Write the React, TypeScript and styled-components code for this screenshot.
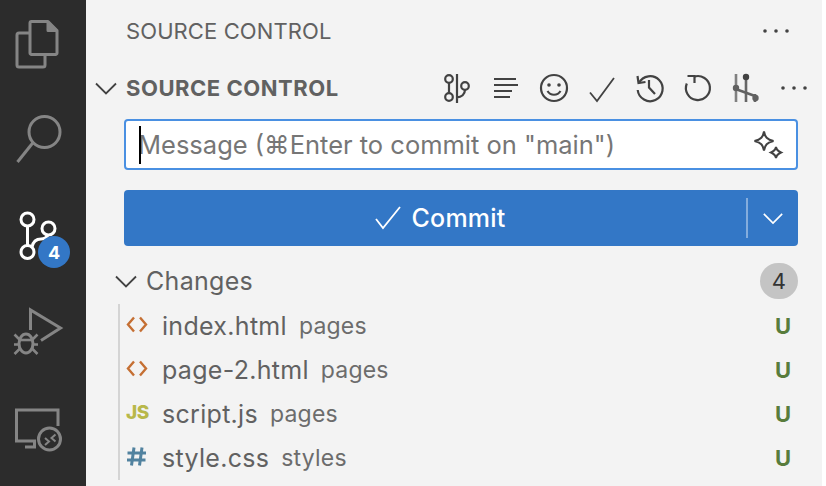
import React from "react";
import styled, { createGlobalStyle } from "styled-components";

const Global = createGlobalStyle`
  html, body { margin: 0; padding: 0; background: #ffffff; }
  body { font-family: Inter, "Liberation Sans", sans-serif; overflow: hidden; }
`;

const Window = styled.div`
  width: 822px;
  height: 486px;
  display: flex;
  background: #f3f3f3;
  overflow: hidden;
`;

const ActivityBar = styled.nav`
  width: 86px;
  flex: none;
  background: #2c2c2c;
  display: flex;
  flex-direction: column;
`;

const ActivityItem = styled.div`
  position: relative;
  height: 96px;
  width: 86px;
  svg { display: block; }
`;

const Badge = styled.span`
  position: absolute;
  left: 38px;
  top: 44px;
  width: 32px;
  height: 32px;
  border-radius: 50%;
  background: #3377c6;
  color: #fff;
  font-size: 18px;
  font-weight: 700;
  display: flex;
  align-items: center;
  justify-content: center;
`;

const SideBar = styled.main`
  flex: 1;
  min-width: 0;
  display: flex;
  flex-direction: column;
`;

const PanelTitleBar = styled.header`
  height: 62px;
  display: flex;
  align-items: center;
  justify-content: space-between;
  padding: 0 32px 0 40px;
  color: #616161;
  font-size: 22px;
  letter-spacing: 0.1px;
  flex: none;
`;

const SectionHeader = styled.div`
  height: 52px;
  display: flex;
  align-items: center;
  padding-left: 8px;
  flex: none;
`;

const SectionTitle = styled.h2`
  margin: 0 0 0 8px;
  flex: 1;
  font-size: 22px;
  font-weight: 700;
  color: #616161;
  letter-spacing: 0.53px;
`;

const Toolbar = styled.div`
  display: flex;
  margin-right: 4px;
`;

const ToolIcon = styled.span`
  width: 48px;
  height: 48px;
  display: flex;
  svg { display: block; }
`;

const Composer = styled.section`
  padding: 5px 24px 0 38px;
  display: flex;
  flex-direction: column;
  gap: 20px;
  flex: none;
`;

const InputBox = styled.div`
  height: 51px;
  box-sizing: border-box;
  border: 2px solid #4a90e2;
  border-radius: 4px;
  background: #fff;
  display: flex;
  align-items: center;
  padding: 0 12px 0 13px;
  color: #767676;
  font-size: 25.5px;
`;

const Caret = styled.span`
  width: 2px;
  height: 38px;
  background: #000;
  flex: none;
  position: relative;
  z-index: 1;
`;

const Placeholder = styled.span`
  flex: 1;
  margin-left: -3px;
  white-space: nowrap;
`;

const CommitButton = styled.button`
  height: 56px;
  border: none;
  padding: 0;
  border-radius: 4px;
  background: #3377c6;
  color: #fff;
  font: inherit;
  font-size: 25px;
  font-weight: 500;
  letter-spacing: 0.2px;
  display: flex;
  align-items: center;
`;

const CommitLabel = styled.span`
  flex: 1;
  display: flex;
  align-items: center;
  justify-content: center;
  gap: 10px;
  padding-left: 9px;
`;

const SplitDivider = styled.span`
  width: 2px;
  height: 40px;
  background: rgba(255, 255, 255, 0.4);
  flex: none;
`;

const SplitChevron = styled.span`
  width: 50px;
  display: flex;
  justify-content: center;
`;

const GroupHeader = styled.div`
  margin-top: 14px;
  height: 42px;
  display: flex;
  align-items: center;
  padding: 0 24px 0 28px;
  color: #616161;
  font-size: 25px;
  letter-spacing: 0.3px;
  flex: none;
`;

const GroupName = styled.span`
  flex: 1;
  margin-left: 8px;
`;

const CountBadge = styled.span`
  width: 38px;
  height: 36px;
  border-radius: 18px;
  background: #c4c4c4;
  color: #333;
  font-size: 22px;
  display: flex;
  align-items: center;
  justify-content: center;
`;

const FileList = styled.ul`
  list-style: none;
  margin: 2px 0 0 32px;
  padding: 0 24px 0 0;
  border-left: 2px solid #d4d4d4;
  height: 176px;
`;

const FileRow = styled.li`
  height: 44px;
  display: flex;
  align-items: center;
  color: #616161;
`;

const FileIcon = styled.span`
  width: 42px;
  flex: none;
  display: flex;
  padding-left: 6px;
  box-sizing: border-box;
  svg { display: block; }
`;

const JsIcon = styled.span`
  color: #b8b84a;
  font-size: 19px;
  font-weight: 800;
  letter-spacing: -0.5px;
  line-height: 20px;
  margin-top: -3px;
`;

const FileName = styled.span`
  font-size: 25px;
  letter-spacing: 0.3px;
`;

const FilePath = styled.span`
  margin-left: 12px;
  font-size: 23px;
  letter-spacing: 0.2px;
  flex: 1;
  color: #6c6c6c;
`;

const Status = styled.span`
  width: 23px;
  font-size: 22px;
  font-weight: 700;
  color: #587c3c;
`;

const Stroke = {
  fill: "none",
  stroke: "currentColor",
  strokeWidth: 2.2,
} as const;

const BAR = "#858585";

const FilesGlyph = () => (
  <svg width="86" height="96" viewBox="0 0 86 96" fill="none" stroke={BAR} strokeWidth="3" strokeLinejoin="round">
    <path d="M29.5 33H19a2 2 0 0 0-2 2v30a2 2 0 0 0 2 2h24a2 2 0 0 0 2-2V54.5" />
    <path d="M31.5 21.5H48l9 9V53a1.5 1.5 0 0 1-1.5 1.5h-24A1.5 1.5 0 0 1 30 53V23a1.5 1.5 0 0 1 1.5-1.5Z" />
    <path d="M48 21.5V30.5H57" fill={BAR} />
  </svg>
);

const SearchGlyph = () => (
  <svg width="86" height="96" viewBox="0 0 86 96" fill="none" stroke={BAR} strokeWidth="3">
    <circle cx="44.5" cy="36" r="15.5" />
    <path d="M33.5 46 17.5 66" />
  </svg>
);

const ScmGlyph = () => (
  <svg width="86" height="96" viewBox="0 0 86 96" fill="none" stroke="#fff" strokeWidth="3">
    <circle cx="27.5" cy="27.5" r="6.5" />
    <circle cx="48.5" cy="36.5" r="6.5" />
    <circle cx="27.5" cy="60" r="6.5" />
    <path d="M27.5 34v19.5" />
    <path d="M32 55c1-5 4-8 9-8 3 0 5.500-1.500 7-4" />
  </svg>
);

const DebugGlyph = () => (
  <svg width="86" height="96" viewBox="0 0 86 96" fill="none" stroke={BAR} strokeWidth="3">
    <path d="M30.5 42V22L60.5 40 41 52.5" />
    <ellipse cx="26" cy="55.500" rx="7" ry="9.500" />
    <path d="M19.500 52h13" strokeWidth="2.600" />
    <path d="M14.500 46.500l5 5M37.500 46.500l-5 5M14 56.500h5M38 56.500h-5M14.500 66l5-5M37.500 66l-5-5" strokeWidth="2.600" />
  </svg>
);

const RemoteGlyph = () => (
  <svg width="86" height="96" viewBox="0 0 86 96" fill="none" stroke={BAR} strokeWidth="3">
    <path d="M58 42V26H16.500V57H36" />
    <path d="M25 63h11" />
    <path d="M34.500 57v6" />
    <circle cx="49.500" cy="55" r="11" />
    <path d="M45 54l4 3.500-4 3.500M55.500 50.500l-4 3.500 4 3.500" strokeWidth="2" />
  </svg>
);

const Tool = ({ children }: { children: React.ReactNode }) => (
  <ToolIcon>
    <svg width="48" height="48" viewBox="0 0 48 48" {...Stroke} color="#424242">
      {children}
    </svg>
  </ToolIcon>
);

const Chevron = ({ color = "#424242", size = 24 }: { color?: string; size?: number }) => (
  <svg width={size} height={size} viewBox="0 0 24 24" fill="none" stroke={color} strokeWidth="1.800">
    <path d="M2 7.500 12 17.500 22 7.500" />
  </svg>
);

const Ellipsis = () => (
  <svg width="28" height="6" viewBox="0 0 28 6" fill="#424242">
    <circle cx="3" cy="3" r="1.800" />
    <circle cx="14" cy="3" r="1.800" />
    <circle cx="25" cy="3" r="1.800" />
  </svg>
);

const HtmlGlyph = () => (
  <svg width="22" height="24" viewBox="0 0 22 24" fill="none" stroke="#c56f33" strokeWidth="2.400">
    <path d="M8 3.500 2 10.500l6 7M14 3.500l6 7-6 7" />
  </svg>
);

const HashGlyph = () => (
  <svg width="22" height="24" viewBox="0 0 22 24" fill="none" stroke="#51829f" strokeWidth="3">
    <path d="M8 1.500 5.500 19.500M16 1.500l-2.500 18M1.500 7H20M1 14h18.500" />
  </svg>
);

const files = [
  { name: "index.html", dir: "pages", icon: <HtmlGlyph /> },
  { name: "page-2.html", dir: "pages", icon: <HtmlGlyph /> },
  { name: "script.js", dir: "pages", icon: <JsIcon>JS</JsIcon> },
  { name: "style.css", dir: "styles", icon: <HashGlyph /> },
];

export default function App() {
  return (
    <>
      <Global />
      <Window>
        <ActivityBar>
          <ActivityItem><FilesGlyph /></ActivityItem>
          <ActivityItem><SearchGlyph /></ActivityItem>
          <ActivityItem>
            <ScmGlyph />
            <Badge>4</Badge>
          </ActivityItem>
          <ActivityItem><DebugGlyph /></ActivityItem>
          <ActivityItem><RemoteGlyph /></ActivityItem>
        </ActivityBar>
        <SideBar>
          <PanelTitleBar>
            <span>SOURCE CONTROL</span>
            <Ellipsis />
          </PanelTitleBar>
          <SectionHeader>
            <Chevron />
            <SectionTitle>SOURCE CONTROL</SectionTitle>
            <Toolbar>
              <Tool>
                <circle cx="15" cy="15" r="3.800" />
                <circle cx="15" cy="33" r="3.800" />
                <circle cx="31" cy="22" r="3.800" />
                <path d="M15 18.800V29.200M23 10v29M31 25.800c0 4.500-3.500 7.500-8 7.500" />
              </Tool>
              <Tool>
                <path d="M12 15h22M12 21h24M12 27h18M12 33h16" />
              </Tool>
              <Tool>
                <circle cx="24" cy="24" r="13" />
                <circle cx="19" cy="21" r="1.800" fill="currentColor" stroke="none" />
                <circle cx="29" cy="21" r="1.800" fill="currentColor" stroke="none" />
                <path d="M17.500 27c3 5 10 5 13 0" />
              </Tool>
              <Tool>
                <path d="M12 28.500 19 37 36 14" strokeWidth="1.800" />
              </Tool>
              <Tool>
                <path d="M13 19a12.500 12.500 0 1 1-1.300 7" />
                <path d="M11.500 12l1 7 7-1M23 16v7.500l6 6.500" />
              </Tool>
              <Tool>
                <path d="M20 12.700a12 12 0 1 1-7.200 6.800" />
                <path d="M13.500 12h7v7" />
              </Tool>
              <Tool>
                <path d="M14 10v28" stroke="#808080" strokeWidth="2.600" />
                <path d="M24 14v24M33 30v8" stroke="#666" strokeWidth="2.600" />
                <circle cx="24" cy="13" r="3.200" fill="currentColor" stroke="none" />
                <circle cx="14" cy="24" r="3.200" fill="#606060" stroke="none" />
                <circle cx="33.500" cy="34" r="3.200" fill="#606060" stroke="none" />
                <path d="M15 25.500 33 32" stroke="#606060" strokeWidth="2.600" />
              </Tool>
              <ToolIcon>
                <svg width="48" height="48" viewBox="0 0 48 48" fill="#424242">
                  <circle cx="13" cy="24" r="1.800" />
                  <circle cx="24" cy="24" r="1.800" />
                  <circle cx="35" cy="24" r="1.800" />
                </svg>
              </ToolIcon>
            </Toolbar>
          </SectionHeader>
          <Composer>
            <InputBox>
              <Caret />
              <Placeholder>Message (⌘Enter to commit on "main")</Placeholder>
              <svg width="32" height="32" viewBox="0 0 32 32" fill="none" stroke="#424242" strokeWidth="2">
                <path d="M12 2.500c1 5.500 3 8 9.500 9.500-6.500 1.500-8.500 4-9.500 9.500-1-5.500-3-8-9.500-9.500C9 10.500 11 8 12 2.500Z" />
                <path d="M24 18c.5 2.500 1.500 4 5 5.500-3.500 1.500-4.500 3-5 5.500-.5-2.500-1.500-4-5-5.500 3.500-1.500 4.500-3 5-5.500Z" />
              </svg>
            </InputBox>
            <CommitButton>
              <CommitLabel>
                <svg width="28" height="26" viewBox="0 0 28 26" fill="none" stroke="#fff" strokeWidth="1.800">
                  <path d="M2 14l7 9L26 2" />
                </svg>
                Commit
              </CommitLabel>
              <SplitDivider />
              <SplitChevron>
                <Chevron color="#fff" size={22} />
              </SplitChevron>
            </CommitButton>
          </Composer>
          <GroupHeader>
            <Chevron />
            <GroupName>Changes</GroupName>
            <CountBadge>4</CountBadge>
          </GroupHeader>
          <FileList>
            {files.map((f) => (
              <FileRow key={f.name}>
                <FileIcon>{f.icon}</FileIcon>
                <FileName>{f.name}</FileName>
                <FilePath>{f.dir}</FilePath>
                <Status>U</Status>
              </FileRow>
            ))}
          </FileList>
        </SideBar>
      </Window>
    </>
  );
}
